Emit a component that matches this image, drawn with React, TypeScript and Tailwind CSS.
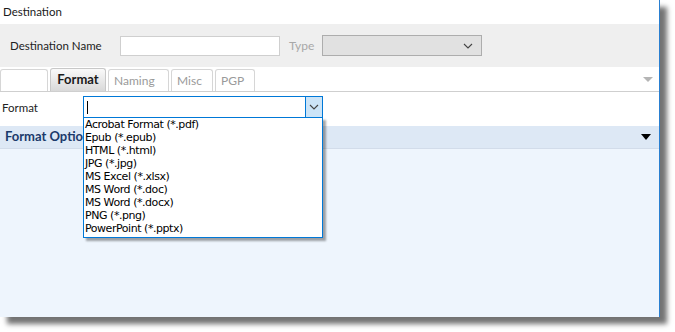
const formats = [
  "Acrobat Format (*.pdf)",
  "Epub (*.epub)",
  "HTML (*.html)",
  "JPG (*.jpg)",
  "MS Excel (*.xlsx)",
  "MS Word (*.doc)",
  "MS Word (*.docx)",
  "PNG (*.png)",
  "PowerPoint (*.pptx)",
];

function Chevron({ className }: { className?: string }) {
  return (
    <svg width="10" height="6" viewBox="0 0 10 6" className={className}>
      <path d="M1 1 L5 5 L9 1" fill="none" stroke="currentColor" strokeWidth="1.1" />
    </svg>
  );
}

function Tab({ label, width, active }: { label: string; width: number; active?: boolean }) {
  return (
    <div
      style={{ width }}
      className={
        active
          ? "flex h-[23px] items-center justify-center rounded-t-[3px] border border-b-0 border-[#c8c8c8] bg-gradient-to-b from-[#fafafa] to-[#d9d9d9] text-[13px] font-bold text-[#1a1a1a]"
          : "flex h-[22px] items-center rounded-t-[3px] border border-b-0 border-[#d6d6d6] bg-white pl-[5px] text-[12px] text-[#9a9a9a]"
      }
    >
      {label}
    </div>
  );
}

export default function App() {
  return (
    <div className="h-[332px] w-[675px] overflow-hidden bg-white font-['Lato',sans-serif]">
      <div className="relative flex h-[317px] w-[660px] flex-col border-r border-[#2a7fd0] bg-white shadow-[7px_7px_5px_rgba(0,0,0,0.55)]">
        <div className="flex h-[24px] items-center pl-[3px] text-[11.5px] text-[#1a1a1a]">Destination</div>

        <div className="flex h-[43px] items-center bg-[#efefef] text-[11.5px]">
          <span className="w-[120px] pl-[10px] text-[#222]">Destination Name</span>
          <div className="h-[20px] w-[160px] border border-[#cfcfcf] bg-white" />
          <span className="ml-[9px] w-[33px] text-[12px] text-[#a8a8a8]">Type</span>
          <div className="flex h-[21px] w-[160px] items-center justify-end border border-[#adadad] bg-[#e1e1e1] pr-[8px] text-[#444]">
            <Chevron />
          </div>
        </div>

        <div className="flex h-[25px] items-end border-b border-[#cfcfcf] pr-[6px]">
          <div className="flex items-end gap-[2px]">
            <Tab label="" width={48} />
            <Tab label="Format" width={56} active />
            <Tab label="Naming" width={61} />
            <Tab label="Misc" width={42} />
            <Tab label="PGP" width={40} />
          </div>
          <div className="mb-[9px] ml-auto h-0 w-0 border-x-[5px] border-t-[5px] border-x-transparent border-t-[#b5b5b5]" />
        </div>

        <div className="relative flex h-[34px] items-start pt-[4px] text-[11.5px]">
          <span className="w-[83px] pl-[2px] pt-[3px] text-[#222]">Format</span>
          <div className="flex h-[22px] w-[240px] border border-[#0078d7] bg-white">
            <div className="flex flex-1 items-center pl-[3px]">
              <div className="h-[13px] w-px bg-black" />
            </div>
            <div className="flex w-[17px] items-center justify-center border-l border-[#0078d7] bg-[#cce4f7] text-[#444]">
              <Chevron />
            </div>
          </div>

          <div className="absolute left-[83px] top-[25px] z-10 flex w-[240px] flex-col border border-[#0078d7] bg-white pb-[2px] font-['DejaVu_Sans',sans-serif] text-[11px] tracking-[-0.45px] text-black shadow-[3px_3px_2px_rgba(0,0,0,0.35)]">
            {formats.map((f) => (
              <div key={f} className="h-[13px] pl-[1px] leading-[13px]">
                {f}
              </div>
            ))}
          </div>
        </div>

        <div className="flex h-[22px] items-center justify-between bg-[#dde8f5] pl-[5px] pr-[8px] text-[13px] font-bold text-[#1b3a6b]">
          <span>Format Options</span>
          <div className="h-0 w-0 border-x-[5px] border-t-[6px] border-x-transparent border-t-black" />
        </div>

        <div className="flex-1 border-t border-[#d2dcea] bg-[#eef5fd]" />
      </div>
    </div>
  );
}
